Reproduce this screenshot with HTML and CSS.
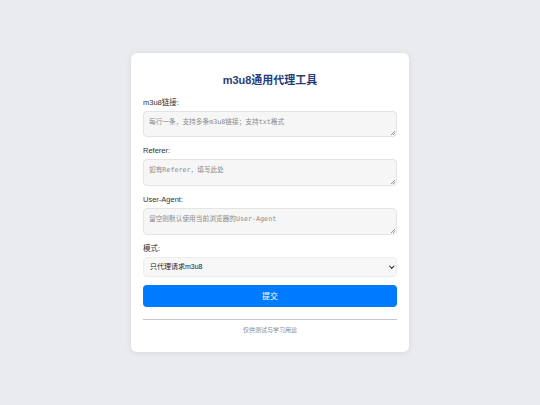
FILE: index.html
```html
<!DOCTYPE html>
<html lang="zh-CN">
<head>
<meta charset="utf-8">
<title>m3u8通用代理工具</title>
<link rel="stylesheet" href="styles.css">
</head>
<body>
<div class="card">
  <h1 class="title">m3u8通用代理工具</h1>
  <div class="group">
    <label class="label">m3u8链接:</label>
    <div class="wrap grip"><textarea class="field" placeholder="每行一条，支持多条m3u8链接；支持txt格式"></textarea></div>
  </div>
  <div class="group">
    <label class="label">Referer:</label>
    <div class="wrap grip"><textarea class="field" placeholder="如有Referer，填写此处"></textarea></div>
  </div>
  <div class="group">
    <label class="label">User-Agent:</label>
    <div class="wrap grip"><textarea class="field" placeholder="留空则默认使用当前浏览器的User-Agent"></textarea></div>
  </div>
  <div class="group">
    <label class="label">模式:</label>
    <div class="wrap chev">
      <select class="select">
        <option>只代理请求m3u8</option>
      </select>
    </div>
  </div>
  <button class="btn">提交</button>
  <hr class="rule">
  <p class="foot">仅供测试与学习用途</p>
</div>
</body>
</html>
```
FILE: styles.css
```css
html, body {
  margin: 0;
  padding: 0;
}
body {
  background: #e9ebef;
  font-family: "Liberation Sans", "Noto Sans CJK SC", sans-serif;
  height: 405px;
  display: flex;
  align-items: center;
  justify-content: center;
}
.card {
  box-sizing: border-box;
  width: 278px;
  padding: 20px 12px 17px;
  background: #fff;
  border-radius: 6px;
  box-shadow: 0 1px 6px rgba(0, 0, 0, 0.08);
}
.title {
  margin: 0 0 9.5px;
  font-size: 11px;
  line-height: 14px;
  font-weight: bold;
  text-align: center;
  color: #283c7c;
}
.group {
  margin-bottom: 8px;
}
.label {
  display: block;
  font-size: 7.5px;
  line-height: 12px;
  margin-bottom: 2px;
  color: #333;
}
.wrap {
  position: relative;
}
.grip::after {
  content: "";
  position: absolute;
  right: 2px;
  bottom: 2px;
  width: 4px;
  height: 4px;
  background: linear-gradient(135deg, transparent 0 45%, #9a9a9a 45% 55%, transparent 55% 72%, #9a9a9a 72% 82%, transparent 82%);
  pointer-events: none;
}
.chev::after {
  content: "";
  position: absolute;
  right: 4px;
  top: 7px;
  width: 2.5px;
  height: 2.5px;
  border-right: 1.2px solid #222;
  border-bottom: 1.2px solid #222;
  transform: rotate(45deg);
  pointer-events: none;
}
.field {
  display: block;
  box-sizing: border-box;
  width: 100%;
  height: 26.7px;
  margin: 0;
  padding: 5px 5px;
  resize: none;
  font-family: "DejaVu Sans Mono", "Noto Sans CJK SC", monospace;
  font-size: 6.7px;
  line-height: 10px;
  background: #f6f6f6;
  border: 1px solid #e4e4e4;
  border-radius: 4px;
  color: #333;
}
.field::placeholder {
  color: #8a8a8a;
}
.select {
  display: block;
  box-sizing: border-box;
  width: 100%;
  height: 20px;
  margin: 0;
  padding: 0 6px;
  appearance: none;
  -webkit-appearance: none;
  font-family: "Liberation Sans", "Noto Sans CJK SC", sans-serif;
  font-size: 7px;
  color: #222;
  background: #f7f7f7;
  border: 1px solid #ededed;
  border-radius: 4px;
}
.btn {
  display: block;
  width: 100%;
  height: 22px;
  margin: 0;
  padding: 0;
  border: none;
  border-radius: 4px;
  background: #007bff;
  color: #fff;
  font-family: "Liberation Sans", "Noto Sans CJK SC", sans-serif;
  font-size: 8px;
}
.rule {
  margin: 12px 0 0;
  border: none;
  border-top: 1px solid #c8c8c8;
}
.foot {
  margin: 5px 0 0;
  font-size: 6px;
  line-height: 10px;
  text-align: center;
  color: #888;
}
```
